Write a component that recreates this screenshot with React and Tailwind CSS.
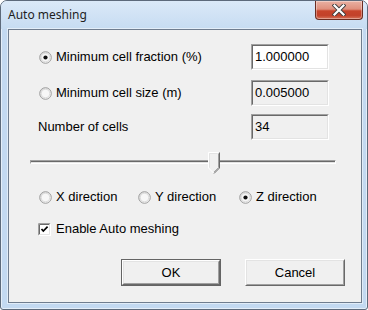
import React from "react";

function Radio({ checked }) {
  return (
    <svg width="13" height="13" viewBox="0 0 13 13" className="shrink-0">
      <defs>
        <linearGradient id="rg" x1="0" y1="0" x2="1" y2="1">
          <stop offset="0" stopColor="#d6d6d6" />
          <stop offset="1" stopColor="#ffffff" />
        </linearGradient>
      </defs>
      <circle cx="6.5" cy="6.5" r="5.8" fill="url(#rg)" stroke="#9c9c9c" strokeWidth="1" />
      <circle cx="6.5" cy="6.5" r="4.3" fill="#f7f7f7" stroke="#dcdcdc" strokeWidth="1" />
      {checked && <circle cx="6.5" cy="6.5" r="2.1" fill="#111" />}
    </svg>
  );
}

function Check() {
  return (
    <svg width="13" height="13" viewBox="0 0 13 13" className="shrink-0">
      <rect x="0" y="0" width="13" height="13" fill="#ffffff" />
      <path d="M0.5 12.5 V0.5 H12.5" fill="none" stroke="#a0a0a0" />
      <path d="M1.5 11.5 V1.5 H11.5" fill="none" stroke="#696969" />
      <path d="M0.5 12.5 H12.5 V0.5" fill="none" stroke="#ffffff" />
      <path d="M1.5 11.5 H11.5 V1.5" fill="none" stroke="#e3e3e3" />
      <path d="M3.5 6 L5.3 8 L9.6 3.6" fill="none" stroke="#000" strokeWidth="1.7" />
    </svg>
  );
}

function Field({ value, white }) {
  return (
    <div className="w-[78px] h-[26px] border border-t-[#a0a0a0] border-l-[#a0a0a0] border-b-white border-r-white">
      <div
        className={
          "w-full h-full border border-t-[#696969] border-l-[#696969] border-b-[#e3e3e3] border-r-[#e3e3e3] flex items-center pl-[2px] " +
          (white ? "bg-white" : "bg-[#f0f0f0]")
        }
      >
        {value}
      </div>
    </div>
  );
}

function Button({ children, def }) {
  return (
    <div
      className={
        "w-[100px] h-[27px] " +
        (def ? "border border-[#646464]" : "")
      }
    >
      <div className="w-full h-full border border-t-white border-l-white border-b-[#696969] border-r-[#696969]">
        <div className="w-full h-full border border-t-[#e3e3e3] border-l-[#e3e3e3] border-b-[#a0a0a0] border-r-[#a0a0a0] bg-[#f0f0f0] flex items-center justify-center">
          {children}
        </div>
      </div>
    </div>
  );
}

export default function App() {
  return (
    <div className="w-[368px] h-[310px] overflow-hidden bg-white">
      <div className="w-[368px] h-[310px] rounded-t-[7px] rounded-b-[3px] border border-[#5d6a7b] bg-[#c3d9f1] shadow-[inset_0_0_0_1px_rgba(255,255,255,0.55)] flex flex-col">
        <div className="h-[28px] flex items-start bg-gradient-to-b from-[#dbe9f8] to-[#c6dcf2] rounded-t-[6px]">
          <div className="pl-[7px] pt-[6px] text-[12px] leading-[15px] text-[#1e1e1e] font-['Noto_Sans','Open_Sans',sans-serif]">
            Auto meshing
          </div>
          <div className="ml-auto mr-[4px] w-[48px] h-[19px] rounded-b-[4px] border border-t-0 border-[#6b2d22] bg-[linear-gradient(#e9b1a3_0%,#df8f7c_45%,#c7442b_55%,#c2412a_80%,#d6735a_100%)] flex items-center justify-center shadow-[inset_0_0_0_1px_rgba(255,255,255,0.35)]">
            <svg width="14" height="12" viewBox="0 0 14 12">
              <path d="M2.5 1.5 L11.5 10.5 M11.5 1.5 L2.5 10.5" stroke="#3d3d3d" strokeWidth="4" strokeLinecap="square" />
              <path d="M2.5 1.5 L11.5 10.5 M11.5 1.5 L2.5 10.5" stroke="#ffffff" strokeWidth="2.2" strokeLinecap="square" />
            </svg>
          </div>
        </div>
        <div className="ml-[7px] w-[354px] h-[274px] border border-[#6f7d8f] bg-[#f0f0f0] shadow-[0_0_0_1px_rgba(255,255,255,0.5)] flex flex-col text-[13px] leading-[16px] text-black font-['Liberation_Sans',Arial,sans-serif]">
          <div className="mt-[14px] h-[26px] flex items-center pr-[32px]">
            <div className="pl-[30px] flex items-center gap-[4px]">
              <Radio checked />
              <span>Minimum cell fraction (%)</span>
            </div>
            <div className="ml-auto">
              <Field value="1.000000" white />
            </div>
          </div>
          <div className="mt-[10px] h-[26px] flex items-center pr-[32px]">
            <div className="pl-[30px] flex items-center gap-[4px]">
              <Radio />
              <span>Minimum cell size (m)</span>
            </div>
            <div className="ml-auto">
              <Field value="0.005000" />
            </div>
          </div>
          <div className="mt-[8px] h-[26px] flex items-center pr-[32px]">
            <div className="pl-[29px]">Number of cells</div>
            <div className="ml-auto">
              <Field value="34" />
            </div>
          </div>
          <div className="mt-[12px] h-[22px] ml-[21px] w-[306px] relative flex flex-col">
            <div className="mt-[8px] h-[4px] border border-t-[#a0a0a0] border-l-[#a0a0a0] border-b-white border-r-white flex flex-col">
              <div className="h-[1px] bg-[#696969]" />
              <div className="h-[1px] bg-[#e3e3e3]" />
            </div>
            <svg width="12" height="22" viewBox="0 0 12 22" className="absolute left-[178px] top-0">
              <path d="M0.5 0.5 H11.5 V16 L6 21.5 L0.5 16 Z" fill="#f0f0f0" />
              <path d="M0.5 16 V0.5 H10.5" fill="none" stroke="#ffffff" />
              <path d="M1.5 15.5 V1.5 H9.5" fill="none" stroke="#e3e3e3" />
              <path d="M11.5 0.5 V16 L6 21.5" fill="none" stroke="#696969" />
              <path d="M10.5 1.5 V15.6 L6 20.1" fill="none" stroke="#a0a0a0" />
              <path d="M0.5 16 L5.5 21" fill="none" stroke="#ffffff" />
            </svg>
          </div>
          <div className="mt-[15px] h-[16px] flex items-center pl-[30px]">
            <div className="w-[99px] flex items-center gap-[4px]">
              <Radio />
              <span>X direction</span>
            </div>
            <div className="w-[101px] flex items-center gap-[4px]">
              <Radio />
              <span>Y direction</span>
            </div>
            <div className="flex items-center gap-[4px]">
              <Radio checked />
              <span>Z direction</span>
            </div>
          </div>
          <div className="mt-[16px] h-[16px] flex items-center pl-[29px] gap-[5px]">
            <Check />
            <span>Enable Auto meshing</span>
          </div>
          <div className="mt-[22px] flex pl-[112px] gap-[24px]">
            <Button def>OK</Button>
            <Button>Cancel</Button>
          </div>
        </div>
      </div>
    </div>
  );
}
